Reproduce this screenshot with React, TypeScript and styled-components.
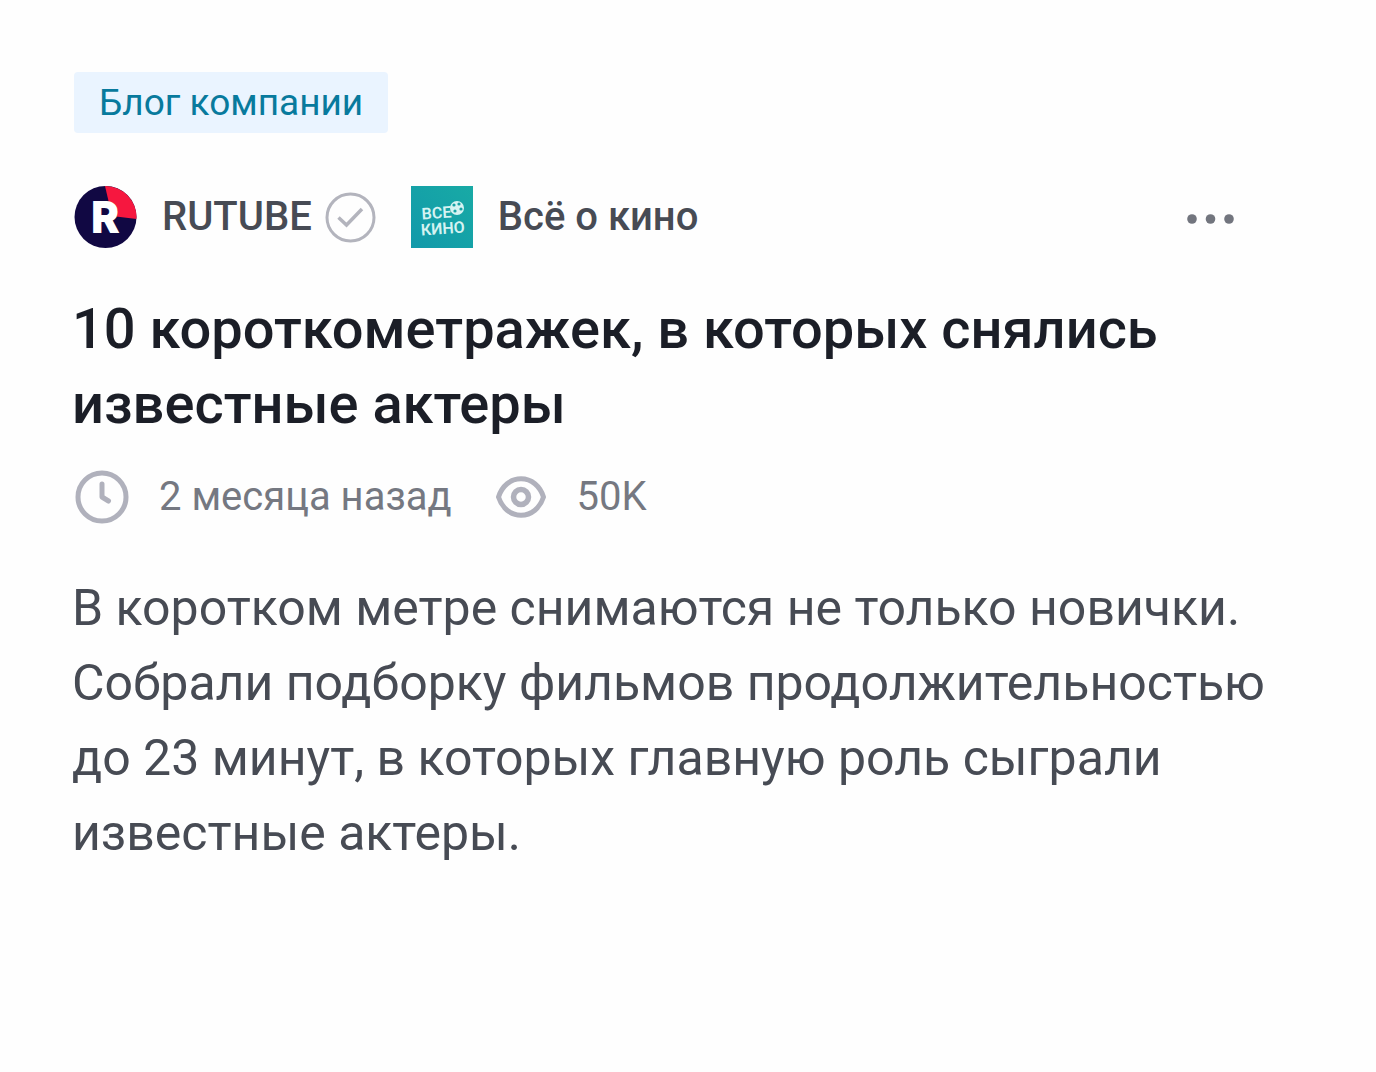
import React from "react";
import styled, { createGlobalStyle } from "styled-components";

const GlobalStyle = createGlobalStyle`
  *, *::before, *::after { box-sizing: border-box; }
  body {
    margin: 0;
    background: #fefefe;
    color: #474b54;
    font-family: Roboto, "Liberation Sans", sans-serif;
  }
`;

const Card = styled.article`
  display: flex;
  flex-direction: column;
  align-items: stretch;
  padding: 72px 72px 72px 72px;
`;

const Tag = styled.a`
  align-self: flex-start;
  margin-left: 2px;
  padding: 0 25px;
  border-radius: 4px;
  background: #eaf4ff;
  color: #087a9d;
  font-size: 37px;
  line-height: 61px;
  text-decoration: none;
`;

const Header = styled.header`
  display: flex;
  align-items: center;
  justify-content: space-between;
  margin-top: 53px;
  padding: 0 67px 0 2px;
`;

const Sources = styled.div`
  display: flex;
  align-items: center;
  gap: 35px;
`;

const Source = styled.a`
  display: flex;
  align-items: center;
  color: #474b54;
  font-size: 40px;
  font-weight: 500;
  line-height: 62px;
  text-decoration: none;
`;

const SourceName = styled.span`
  margin-left: 25px;
`;

const Verified = styled.svg`
  margin-left: 13px;
`;

const MoreButton = styled.button`
  display: flex;
  align-items: center;
  height: 62px;
  padding: 4px 0 0;
  border: 0;
  background: none;
  cursor: pointer;
`;

const Title = styled.h1`
  margin: 44px 0 0;
  color: #1b1e27;
  font-size: 56px;
  font-weight: 500;
  line-height: 75px;
`;

const Meta = styled.div`
  display: flex;
  align-items: center;
  gap: 42px;
  margin-top: 25px;
  padding-left: 2px;
  color: #757881;
  font-size: 40px;
  line-height: 60px;
`;

const MetaItem = styled.span`
  display: flex;
  align-items: center;
  gap: 29px;
`;

const Summary = styled.p`
  margin: 44px 0 0;
  color: #474b54;
  font-size: 50px;
  line-height: 75px;
`;

const RutubeLogo = () => (
  <svg width="63" height="62" viewBox="0 0 63 62" aria-hidden="true">
    <circle cx="31.5" cy="31" r="31" fill="#110843" />
    <path d="M31 0A31 31 0 0 1 62.4 33L38 30Z" fill="#f6173f" />
    <text x="31" y="46" textAnchor="middle" fill="#fff" fontFamily="Inter, sans-serif" fontWeight="700" fontSize="41" stroke="#fff" strokeWidth="2">R</text>
  </svg>
);

const CinemaLogo = () => (
  <svg width="62" height="62" viewBox="0 0 62 62" aria-hidden="true">
    <defs>
      <linearGradient id="cinema-teal" x1="1" y1="0" x2="0" y2="1">
        <stop offset="0" stopColor="#18aaa5" />
        <stop offset="1" stopColor="#1299aa" />
      </linearGradient>
    </defs>
    <rect width="62" height="62" fill="url(#cinema-teal)" />
    <g transform="rotate(-4 31 31)" fill="#d5f3f2" fontFamily="Roboto, sans-serif" fontWeight="600">
      <text x="11" y="32" fontSize="16">ВСЕ</text>
      <text x="9" y="48" fontSize="16">КИНО</text>
    </g>
    <circle cx="46" cy="22" r="7" fill="#d5f3f2" />
    <g fill="#17a2a5">
      <circle cx="43" cy="19" r="1.6" />
      <circle cx="48" cy="18" r="1.6" />
      <circle cx="50" cy="23" r="1.6" />
      <circle cx="44" cy="25" r="1.6" />
    </g>
  </svg>
);

const VerifiedIcon = () => (
  <Verified width="51" height="51" viewBox="0 0 51 51" fill="none" stroke="#b3b4bd" role="img" aria-label="✓">
    <circle cx="25.5" cy="25.5" r="23.5" strokeWidth="3" />
    <path d="M13.5 25.5L21.5 33L37 17" strokeWidth="3.5" />
  </Verified>
);

const ClockIcon = () => (
  <svg width="56" height="56" viewBox="0 0 56 56" fill="none" stroke="#b0b1bc" strokeWidth="5" strokeLinecap="round" strokeLinejoin="round" aria-hidden="true">
    <circle cx="28" cy="28" r="24" />
    <path d="M28 15V28L34.5 32" />
  </svg>
);

const EyeIcon = () => (
  <svg width="54" height="56" viewBox="0 0 54 56" fill="none" stroke="#b0b1bc" strokeWidth="5" strokeLinejoin="round" aria-hidden="true">
    <path d="M4.5 28C8 17 16.5 9.8 27 9.8S46 17 49.5 28C46 39 37.5 46.2 27 46.2S8 39 4.5 28Z" />
    <circle cx="27" cy="28" r="7.5" strokeWidth="5.5" />
  </svg>
);

const MoreIcon = () => (
  <svg width="52" height="12" viewBox="0 0 52 12" fill="#72757e" aria-hidden="true">
    <circle cx="7" cy="6" r="4.8" />
    <circle cx="25.5" cy="6" r="4.8" />
    <circle cx="44" cy="6" r="4.8" />
  </svg>
);

export default function App() {
  return (
    <>
      <GlobalStyle />
      <Card>
        <Tag href="#blog">Блог компании</Tag>
        <Header>
          <Sources>
            <Source href="#rutube">
              <RutubeLogo />
              <SourceName>RUTUBE</SourceName>
              <VerifiedIcon />
            </Source>
            <Source href="#cinema">
              <CinemaLogo />
              <SourceName>Всё о кино</SourceName>
            </Source>
          </Sources>
          <MoreButton type="button" aria-label="…">
            <MoreIcon />
          </MoreButton>
        </Header>
        <Title>10 короткометражек, в которых снялись известные актеры</Title>
        <Meta>
          <MetaItem>
            <ClockIcon />
            <time>2 месяца назад</time>
          </MetaItem>
          <MetaItem>
            <EyeIcon />
            <span>50K</span>
          </MetaItem>
        </Meta>
        <Summary>
          В коротком метре снимаются не только новички. Собрали подборку фильмов
          продолжительностью до 23 минут, в которых главную роль сыграли известные актеры.
        </Summary>
      </Card>
    </>
  );
}
